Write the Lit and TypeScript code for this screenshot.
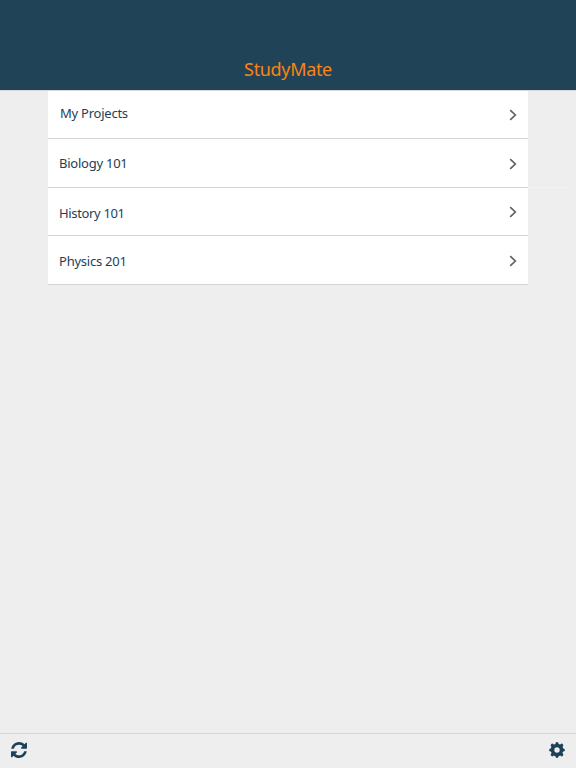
import { LitElement, html, css } from "lit";
import { customElement } from "lit/decorators.js";

interface Course {
  name: string;
  cls: string;
}

const COURSES: Course[] = [
  { name: "My Projects", cls: "projects" },
  { name: "Biology 101", cls: "biology" },
  { name: "History 101", cls: "history" },
  { name: "Physics 201", cls: "physics" },
];

@customElement("app-root")
export class AppRoot extends LitElement {
  static styles = css`
    :host {
      display: flex;
      flex-direction: column;
      height: 768px;
      background: #eeeeee;
      color: #1d4158;
      font-family: "Noto Sans", "Open Sans", sans-serif;
    }
    header {
      box-sizing: border-box;
      height: 90px;
      padding-top: 57px;
      background: #214357;
      color: #fb8412;
      text-align: center;
    }
    h1 {
      margin: 0;
      font-size: 18px;
      line-height: 24px;
      font-weight: 400;
      letter-spacing: -0.34px;
    }
    main {
      flex: 1;
      padding: 0 48px;
      border-top: 1px solid #d3dadd;
    }
    ul {
      margin: 0;
      padding: 0;
      list-style: none;
    }
    li {
      box-sizing: border-box;
      display: flex;
      justify-content: space-between;
      height: 49px;
      padding: 0 11px 0 12px;
      background: #ffffff;
      border-bottom: 1px solid #d4d4d4;
      font-size: 13px;
      line-height: 18px;
      letter-spacing: -0.24px;
    }
    .projects { height: 48px; padding-top: 13px; }
    .biology { position: relative; padding-top: 15px; padding-left: 11px; }
    .biology::after {
      content: "";
      position: absolute;
      left: 100%;
      bottom: -1px;
      width: 43px;
      height: 1px;
      background: #f2f2f2;
    }
    .history { height: 48px; padding-top: 16px; padding-left: 11px; letter-spacing: -0.34px; }
    .physics { padding-top: 16px; padding-left: 11px; }
    .chevron {
      align-self: flex-end;
      width: 8px;
      height: 12px;
      margin-bottom: 17px;
      fill: none;
      stroke: #626262;
      stroke-width: 1.7;
    }
    footer {
      box-sizing: border-box;
      display: flex;
      justify-content: space-between;
      height: 35px;
      padding: 8px 11px 0;
      border-top: 1px solid #d4d4d4;
    }
    .icon {
      width: 16px;
      height: 16px;
      fill: #1d4158;
    }
    .ring {
      fill: none;
      stroke: #1d4158;
      stroke-width: 3.6;
    }
    .teeth {
      fill: none;
      stroke: #1d4158;
      stroke-width: 3.2;
      stroke-linejoin: round;
      stroke-linecap: round;
    }
  `;

  render() {
    return html`
      <header><h1>StudyMate</h1></header>
      <main>
        <ul>
          ${COURSES.map(
            (c) => html`<li class=${c.cls}>
              <span>${c.name}</span>
              <svg class="chevron" viewBox="0 0 8 12"><path d="M1.2 1.2 6.3 6 1.2 10.8" /></svg>
            </li>`
          )}
        </ul>
      </main>
      <footer>
        <svg class="icon" viewBox="0 0 1536 1536">
          <path d="M1511 928q0 5-1 7-64 268-268 434.5t-478 166.5q-146 0-282.5-55t-243.5-157l-129 129q-19 19-45 19t-45-19-19-45v-448q0-26 19-45t45-19h448q26 0 45 19t19 45-19 45l-137 137q71 66 161 102t187 36q134 0 250-65t186-179q11-17 53-117 8-23 30-23h192q13 0 22.5 9.5t9.5 22.5zm25-800v448q0 26-19 45t-45 19h-448q-26 0-45-19t-19-45 19-45l138-138q-148-137-349-137-134 0-250 65t-186 179q-11 17-53 117-8 23-30 23h-199q-13 0-22.5-9.5t-9.5-22.5v-7q65-268 270-434.5t480-166.5q146 0 284 55.5t245 156.5l130-129q19-19 45-19t45 19 19 45z" />
        </svg>
        <svg class="icon" viewBox="0 0 16 16">
          <circle class="ring" cx="8" cy="8" r="4.5" />
          <path class="teeth" d="M8 1.7V3M8 13v1.3M1.7 8H3M13 8h1.3M3.3 3.3l1 1M11.7 11.7l1 1M3.3 12.7l1-1M11.7 4.3l1-1" />
        </svg>
      </footer>
    `;
  }
}
